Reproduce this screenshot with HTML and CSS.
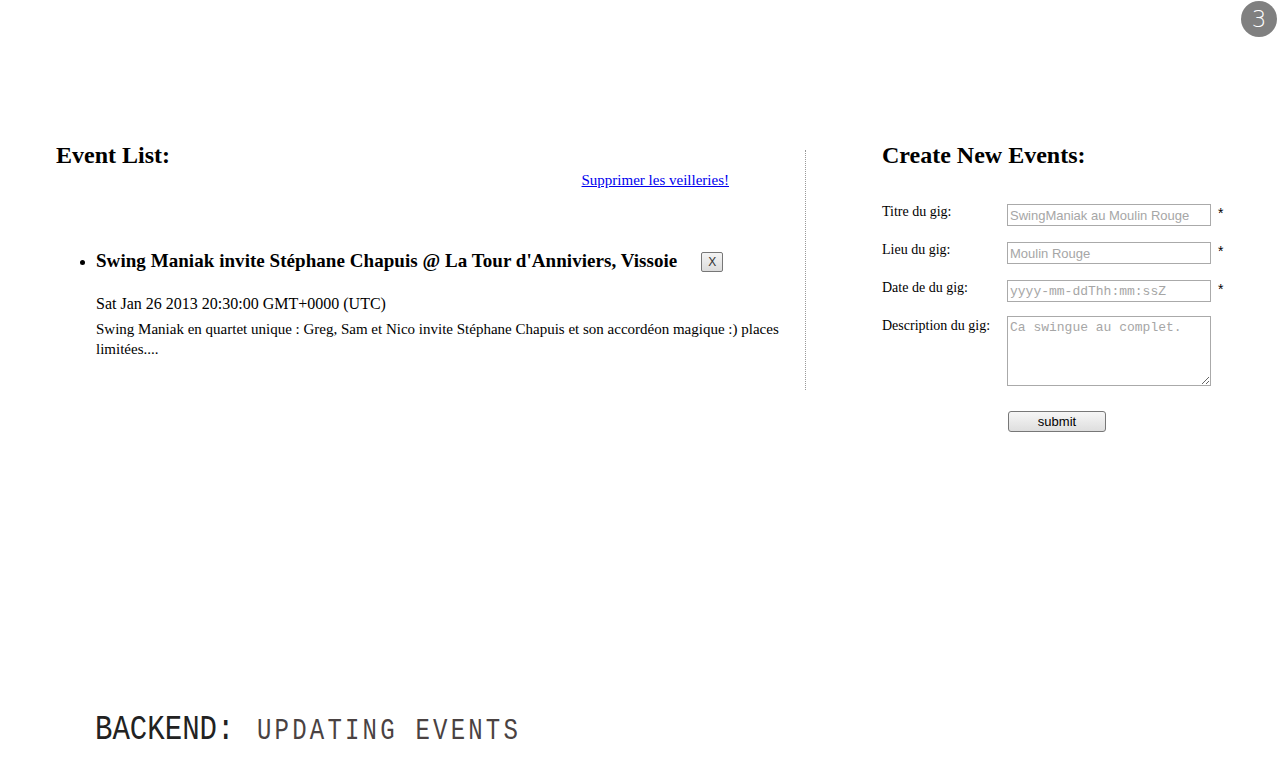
FILE: index.html
```html
<!DOCTYPE html>
<html>
<head>
<meta charset="utf-8">
<link rel="stylesheet" href="styles.css">
</head>
<body>
<div class="slide">
  <div class="badge">3</div>
  <div class="columns">
    <section class="events">
      <h2 class="title">Event List:</h2>
      <div class="link-row"><a href="#" class="purge">Supprimer les veilleries!</a></div>
      <ul class="event-list">
        <li class="event">
          <div class="event-head">
            <span class="event-name">Swing Maniak invite Stéphane Chapuis @ La Tour d'Anniviers, Vissoie</span>
            <button class="del">X</button>
          </div>
          <div class="event-date">Sat Jan 26 2013 20:30:00 GMT+0000 (UTC)</div>
          <div class="event-desc">Swing Maniak en quartet unique : Greg, Sam et Nico invite Stéphane Chapuis et son accordéon magique :) places limitées....</div>
        </li>
      </ul>
    </section>
    <section class="create">
      <h2 class="title">Create New Events:</h2>
      <form class="form">
        <label class="lbl">Titre du gig:</label>
        <input class="field" type="text" placeholder="SwingManiak au Moulin Rouge">
        <span class="req">*</span>
        <label class="lbl">Lieu du gig:</label>
        <input class="field" type="text" placeholder="Moulin Rouge">
        <span class="req">*</span>
        <label class="lbl">Date de du gig:</label>
        <input class="field mono" type="text" placeholder="yyyy-mm-ddThh:mm:ssZ">
        <span class="req">*</span>
        <label class="lbl">Description du gig:</label>
        <textarea class="area" placeholder="Ca swingue au complet."></textarea>
        <span></span>
        <span></span>
        <div class="submit-cell"><button type="button" class="submit">submit</button></div>
      </form>
    </section>
  </div>
  <h1 class="footer"><span class="f1">BACKEND:</span><span class="f2">UPDATING EVENTS</span></h1>
</div>
</body>
</html>
```

FILE: styles.css
```css
html, body {
  margin: 0;
  padding: 0;
  background: #fff;
}
body {
  font-family: "Liberation Serif", "Times New Roman", serif;
  color: #000;
}
.slide {
  position: relative;
  width: 1280px;
  height: 768px;
  overflow: hidden;
}
.badge {
  position: absolute;
  top: 1px;
  right: 3px;
  width: 36px;
  height: 36px;
  border-radius: 50%;
  background: #808080;
  color: #fff;
  font-family: "DejaVu Sans", sans-serif;
  font-weight: 200;
  font-size: 23px;
  line-height: 36px;
  text-align: center;
}
.columns {
  display: flex;
  padding-top: 141px;
}
.events {
  box-sizing: border-box;
  margin-left: 56px;
  width: 750px;
  padding-right: 76px;
  border-right: 1px dotted #999;
  margin-top: 9px;
  height: 240px;
}
.title {
  font-size: 24px;
  font-weight: bold;
  margin: 0;
  line-height: 28px;
}
.events .title {
  margin-top: -9px;
}
.link-row {
  text-align: right;
  margin-top: 2px;
}
.purge {
  color: #0000ee;
  font-size: 15px;
}
.event-list {
  margin: 60px 0 0 0;
  padding-left: 40px;
}
.event-head {
  display: flex;
  align-items: center;
  gap: 24px;
}
.event-name {
  font-size: 19px;
  font-weight: bold;
  letter-spacing: 0.05px;
}
.del {
  width: 22px;
  height: 20px;
  padding: 0;
  margin-top: 3px;
  font-family: "Liberation Sans", sans-serif;
  font-size: 12px;
  color: #333;
  border: 1px solid #777;
  border-radius: 2px;
  background: linear-gradient(#f4f4f4, #dcdcdc);
}
.event-date {
  font-size: 16px;
  margin-top: 23px;
}
.event-desc {
  font-size: 15px;
  line-height: 20px;
  margin-top: 6px;
  width: 700px;
}
.create {
  margin-left: 76px;
}
.form {
  display: grid;
  grid-template-columns: 118px 204px auto;
  column-gap: 7px;
  row-gap: 16px;
  margin-top: 35px;
  align-items: start;
}
.lbl {
  font-size: 14px;
  line-height: 16px;
  padding-top: 0;
}
.field {
  box-sizing: border-box;
  width: 204px;
  height: 22px;
  border: 1px solid #aaa;
  padding: 0 2px;
  font-family: "Liberation Sans", sans-serif;
  font-size: 13px;
  margin: 0;
}
.field::placeholder {
  color: #a6a6a6;
}
.mono {
  font-family: "Liberation Mono", monospace;
}
.area {
  box-sizing: border-box;
  width: 204px;
  height: 70px;
  border: 1px solid #aaa;
  padding: 3px 2px;
  margin: -2px 0 0 0;
  font-family: "Liberation Mono", monospace;
  font-size: 13px;
  resize: both;
}
.area::placeholder {
  color: #a6a6a6;
}
.req {
  font-family: "Liberation Sans", sans-serif;
  font-size: 14px;
  line-height: 18px;
}
.submit-cell {
  grid-column: 2;
  padding-top: 9px;
  padding-left: 1px;
}
.submit {
  width: 98px;
  height: 21px;
  padding: 0;
  font-family: "Liberation Sans", sans-serif;
  font-size: 13px;
  color: #000;
  border: 1px solid #777;
  border-radius: 3px;
  background: linear-gradient(#f6f6f6, #dedede);
}
.footer {
  position: absolute;
  left: 95px;
  top: 710px;
  margin: 0;
  font-weight: normal;
  white-space: nowrap;
  font-family: "Liberation Mono", monospace;
}
.f1 {
  display: inline-block;
  font-size: 35px;
  color: #222;
  transform: scaleX(0.83);
  transform-origin: left bottom;
}
.f2 {
  display: inline-block;
  font-size: 30px;
  color: #4a4242;
  letter-spacing: 4px;
  margin-left: -6px;
  transform: scaleX(0.8);
  transform-origin: left bottom;
}
```
